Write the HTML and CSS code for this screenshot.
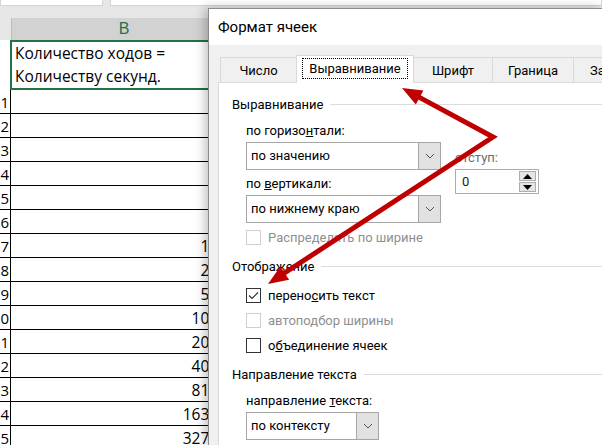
FILE: index.html
```html
<!DOCTYPE html>
<html lang="ru">
<head>
    <meta charset="UTF-8">
    <title>Формат ячеек</title>
    <link rel="stylesheet" href="styles.css">
</head>
<body>
    <div class="sheet">
        <div class="topbar">
            <div class="namebox"></div>
            <div class="fbar"></div>
        </div>
        <div class="colhead">
            <div class="corner"></div>
            <div class="hb">B</div>
        </div>
        <div class="row tall">
            <div class="rn"></div>
            <div class="cell sel">Количество ходов =<br>Количеству секунд.</div>
        </div>
        <div class="row"><div class="rn">1</div><div class="cell"></div></div>
        <div class="row"><div class="rn">2</div><div class="cell"></div></div>
        <div class="row"><div class="rn">3</div><div class="cell"></div></div>
        <div class="row"><div class="rn">4</div><div class="cell"></div></div>
        <div class="row"><div class="rn">5</div><div class="cell"></div></div>
        <div class="row"><div class="rn">6</div><div class="cell"></div></div>
        <div class="row"><div class="rn">7</div><div class="cell">127</div></div>
        <div class="row"><div class="rn">8</div><div class="cell">255</div></div>
        <div class="row"><div class="rn">9</div><div class="cell">511</div></div>
        <div class="row"><div class="rn">0</div><div class="cell">1023</div></div>
        <div class="row"><div class="rn">1</div><div class="cell">2047</div></div>
        <div class="row"><div class="rn">2</div><div class="cell">4095</div></div>
        <div class="row"><div class="rn">3</div><div class="cell">8191</div></div>
        <div class="row"><div class="rn">4</div><div class="cell">16383</div></div>
        <div class="row"><div class="rn">5</div><div class="cell">32767</div></div>
    </div>

    <div class="dialog">
        <div class="title">Формат ячеек</div>
        <div class="tabs">
            <div class="tab t-num">Число</div>
            <div class="tab active"><span class="focus">Выравнивание</span></div>
            <div class="tab t-font">Шрифт</div>
            <div class="tab t-border">Граница</div>
            <div class="tab t-fill">Заливка</div>
        </div>
        <div class="panel">
            <div class="group">Выравнивание</div>
            <div class="align">
                <div class="align-left">
                    <div class="lbl first">по горизо<u>н</u>тали:</div>
                    <div class="select wide">
                        <span class="val">по значению</span>
                        <span class="btn"><svg width="10" height="6" viewBox="0 0 10 6"><path d="M1 1 L5 5 L9 1" fill="none" stroke="#555" stroke-width="1"/></svg></span>
                    </div>
                    <div class="lbl">по <u>в</u>ертикали:</div>
                    <div class="select wide">
                        <span class="val">по нижнему краю</span>
                        <span class="btn"><svg width="10" height="6" viewBox="0 0 10 6"><path d="M1 1 L5 5 L9 1" fill="none" stroke="#555" stroke-width="1"/></svg></span>
                    </div>
                    <div class="check off">
                        <span class="box"></span>
                        <span>Распределять по ширине</span>
                    </div>
                </div>
                <div class="indent">
                    <div class="lbl first dim">отступ:</div>
                    <div class="spin">
                        <span class="num">0</span>
                        <span class="arrows-box">
                            <span class="sb"><svg width="9" height="5" viewBox="0 0 9 5"><path d="M0 5 L4.5 0 L9 5 Z" fill="#000"/></svg></span>
                            <span class="sb"><svg width="9" height="5" viewBox="0 0 9 5"><path d="M0 0 L4.5 5 L9 0 Z" fill="#000"/></svg></span>
                        </span>
                    </div>
                </div>
            </div>

            <div class="group">Отображение</div>
            <div class="checks">
                <div class="check">
                    <span class="box"><svg width="13" height="13" viewBox="0 0 13 13"><path d="M2 6.5 L5 9.5 L11 3.5" fill="none" stroke="#333" stroke-width="1.2"/></svg></span>
                    <span>перено<u>с</u>ить текст</span>
                </div>
                <div class="check off">
                    <span class="box"></span>
                    <span>автоподбор ширины</span>
                </div>
                <div class="check">
                    <span class="box"></span>
                    <span>о<u>б</u>ъединение ячеек</span>
                </div>
            </div>

            <div class="group">Направление текста</div>
            <div class="sub">
                <div class="lbl first">направление <u>т</u>екста:</div>
                <div class="select narrow">
                    <span class="val">по контексту</span>
                    <span class="btn"><svg width="10" height="6" viewBox="0 0 10 6"><path d="M1 1 L5 5 L9 1" fill="none" stroke="#555" stroke-width="1"/></svg></span>
                </div>
            </div>
        </div>
    </div>

    <svg class="marks" width="602" height="445" viewBox="0 0 602 445">
        <polyline points="418,96.6 493,137 283,274" fill="none" stroke="#c00000" stroke-width="5" stroke-linejoin="miter"/>
        <polygon points="402,88 423.4,90.5 415.8,104.5" fill="#c00000"/>
        <polygon points="268,284 289.1,279.8 280.3,266.4" fill="#c00000"/>
    </svg>
</body>
</html>
```

FILE: styles.css
```css
body {
    margin: 0;
    width: 602px;
    height: 445px;
    overflow: hidden;
    position: relative;
    background: #fff;
    font-family: 'Open Sans', sans-serif;
    color: #000;
}
.sheet {
    display: flex;
    flex-direction: column;
}
.topbar {
    height: 18px;
    background: #e6e6e6;
    display: flex;
    align-items: flex-start;
    gap: 7px;
}
.namebox,
.fbar {
    height: 5px;
    background: #fff;
    border: 1px solid #d4d4d4;
    border-top: none;
}
.namebox {
    width: 101px;
}
.fbar {
    flex: 1;
}
.colhead {
    display: flex;
    height: 22px;
    background: #e6e6e6;
}
.corner {
    width: 11px;
}
.hb {
    width: 224px;
    background: #d2d2d2;
    border-left: 1px solid #bcbcbc;
    color: #217346;
    font-family: 'Liberation Sans', sans-serif;
    font-size: 16px;
    line-height: 22px;
    text-align: center;
}
.row {
    display: flex;
    height: 24px;
    box-sizing: border-box;
    border-bottom: 1px solid #000;
    font-family: 'Open Sans', sans-serif;
    font-size: 15.5px;
}
.row.tall {
    height: 50px;
    border-bottom: none;
}
.rn {
    width: 11px;
    border-right: 1px solid #000;
    display: flex;
    justify-content: flex-end;
    align-items: center;
    padding-right: 1px;
    box-sizing: border-box;
    font-size: 15px;
}
.cell {
    width: 224px;
    display: flex;
    justify-content: flex-end;
    align-items: center;
    padding-right: 8px;
    box-sizing: border-box;
}
.cell.sel {
    border: 2px solid #217346;
    display: block;
    padding: 0 0 0 3px;
    line-height: 23px;
    width: 230px;
    margin-left: -1px;
}

.dialog {
    position: absolute;
    left: 208px;
    top: 8px;
    right: 0;
    bottom: 0;
    overflow: hidden;
    background: #f0f0f0;
    border-left: 1px solid #8c8c8c;
    border-top: 1px solid #8c8c8c;
    box-shadow: -3px 0 10px rgba(0, 0, 0, 0.25);
    display: flex;
    flex-direction: column;
    font-family: Roboto, sans-serif;
    font-size: 13px;
}
.title {
    height: 36px;
    flex-shrink: 0;
    background: #fff;
    font-size: 15px;
    line-height: 36px;
    padding-left: 9px;
}
.tabs {
    height: 37px;
    flex-shrink: 0;
    display: flex;
    align-items: flex-end;
    padding-left: 11px;
    position: relative;
    z-index: 2;
}
.tab {
    flex-shrink: 0;
    height: 25px;
    box-sizing: border-box;
    border: 1px solid #d9d9d9;
    border-bottom: none;
    border-left: none;
    display: flex;
    align-items: center;
    justify-content: center;
    white-space: nowrap;
    overflow: hidden;
}
.t-num {
    width: 77px;
    border-left: 1px solid #d9d9d9;
}
.t-font {
    width: 79px;
}
.t-border {
    width: 81px;
}
.t-fill {
    width: 28px;
    justify-content: flex-start;
    padding-left: 16px;
    border-right: none;
}
.tab.active {
    width: 118px;
    height: 28px;
    margin-bottom: -1px;
    background: #fff;
    border-left: 1px solid #d9d9d9;
    margin-left: -1px;
}
.focus {
    border: 1px dotted #000;
    width: 104px;
    height: 19px;
    display: flex;
    align-items: center;
    justify-content: center;
    margin-bottom: 2px;
}
.panel {
    flex: 1;
    margin-left: 9px;
    background: #fff;
    border-top: 1px solid #d9d9d9;
    border-left: 1px solid #d9d9d9;
    padding-left: 13px;
    display: flex;
    flex-direction: column;
}
.group {
    display: flex;
    align-items: center;
    height: 18px;
    margin-top: 12px;
    white-space: nowrap;
}
.group::after {
    content: "";
    flex: 1;
    height: 1px;
    background: #dcdcdc;
    margin-left: 7px;
}
.align {
    display: flex;
    padding-left: 14px;
}
.align-left {
    width: 195px;
}
.lbl {
    height: 18px;
    line-height: 18px;
    margin-top: 5px;
    margin-bottom: 2px;
    white-space: nowrap;
}
.lbl.first {
    margin-top: 9px;
}
.dim {
    color: #6d6d6d;
}
.select {
    height: 28px;
    box-sizing: border-box;
    border: 1px solid #a6a6a6;
    display: flex;
    background: #fff;
}
.wide {
    width: 195px;
}
.narrow {
    width: 133px;
}
.val {
    flex: 1;
    line-height: 26px;
    padding-left: 4px;
    white-space: nowrap;
}
.btn {
    width: 21px;
    background: #e1e1e1;
    border-left: 1px solid #a6a6a6;
    display: flex;
    align-items: center;
    justify-content: center;
}
.check {
    display: flex;
    align-items: center;
    gap: 7px;
    height: 16px;
    margin-top: 6px;
    white-space: nowrap;
}
.check .box {
    width: 15px;
    height: 15px;
    box-sizing: border-box;
    border: 1px solid #333;
    display: flex;
    align-items: center;
    justify-content: center;
}
.check.off {
    color: #8f8f8f;
}
.check.off .box {
    border-color: #cfcfcf;
}
.indent {
    margin-left: 14px;
    padding-top: 27px;
}
.spin {
    width: 84px;
    height: 25px;
    box-sizing: border-box;
    border: 1px solid #adadad;
    display: flex;
}
.num {
    flex: 1;
    padding-left: 6px;
    line-height: 23px;
    color: #1a1a1a;
}
.arrows-box {
    width: 17px;
    display: flex;
    flex-direction: column;
    padding: 1px 2px 1px 0;
    gap: 1px;
}
.sb {
    flex: 1;
    background: #e5e5e5;
    border: 1px solid #adadad;
    display: flex;
    align-items: center;
    justify-content: center;
}
.checks {
    padding-left: 14px;
    display: flex;
    flex-direction: column;
    gap: 9px;
    margin-top: 12px;
}
.checks .check {
    margin-top: 0;
}
.sub {
    padding-left: 14px;
}
.marks {
    position: absolute;
    left: 0;
    top: 0;
    pointer-events: none;
}
```
